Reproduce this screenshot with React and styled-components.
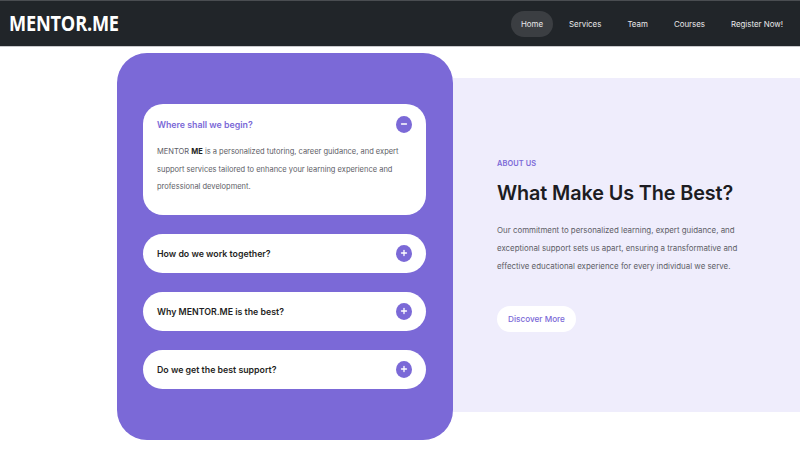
import React from "react";
import styled, { createGlobalStyle } from "styled-components";

const Global = createGlobalStyle`
  html, body { margin: 0; padding: 0; background: #ffffff; }
  body { font-family: "Inter", "Noto Sans", sans-serif; }
  * { box-sizing: border-box; }
`;

const Page = styled.div`
  width: 800px;
  height: 463px;
  overflow: hidden;
  background: #ffffff;
`;

const Nav = styled.nav`
  height: 47px;
  background: #212529;
  border-top: 1px solid #4a4d51;
  border-bottom: 1px solid #c9c9cc;
  display: flex;
  align-items: center;
  justify-content: space-between;
  padding: 0 7px 0 9px;
`;

const Logo = styled.div`
  font-family: "Open Sans", sans-serif;
  font-weight: 700;
  font-size: 18.2px;
  line-height: 1;
  color: #ffffff;
  letter-spacing: -0.2px;
  transform: scaleY(1.15);
  transform-origin: left center;
`;

const Links = styled.div`
  display: flex;
  align-items: center;
  gap: 6px;
`;

const NavLink = styled.a`
  font-size: 7.9px;
  color: #e9e9ea;
  height: 26px;
  display: flex;
  align-items: center;
  padding: 0 10px;
  border-radius: 13px;
  background: ${(p) => (p.$active ? "#3b3e42" : "transparent")};
`;

const Section = styled.section`
  display: flex;
  align-items: flex-start;
  padding: 6px 0 0 117px;
`;

const Card = styled.div`
  width: 336px;
  flex: none;
  background: #7b69d7;
  border-radius: 30px;
  padding: 51px 27px 51px 26px;
  display: flex;
  flex-direction: column;
  gap: 19px;
`;

const Item = styled.div`
  background: #ffffff;
  border-radius: 20px;
  padding: ${(p) => (p.$open ? "13px 14px 19px 14px" : "0 14px")};
  min-height: 39px;
  display: flex;
  flex-direction: column;
  justify-content: center;
`;

const ItemHead = styled.div`
  display: flex;
  align-items: center;
  justify-content: space-between;
  height: ${(p) => (p.$open ? "14px" : "auto")};
`;

const ItemTitle = styled.div`
  font-size: 8.8px;
  font-weight: 600;
  color: ${(p) => (p.$open ? "#7b69d7" : "#1f1f24")};
`;

const Toggle = styled.span`
  width: 16px;
  height: 17px;
  border-radius: 50%;
  background: #7b69d7;
  display: flex;
  align-items: center;
  justify-content: center;
  flex: none;
`;

const Answer = styled.p`
  margin: 12px 0 0 0;
  font-size: 7.5px;
  line-height: 17.5px;
  color: #5d5d66;
`;

const Strong = styled.strong`
  color: #1f1f24;
  font-weight: 700;
`;

const About = styled.div`
  flex: 1;
  margin-top: 25px;
  height: 334px;
  background: #efedfc;
  padding: 81px 30px 0 44px;
`;

const Eyebrow = styled.div`
  font-size: 7.4px;
  font-weight: 600;
  color: #7b69d7;
  letter-spacing: 0.1px;
`;

const Heading = styled.h2`
  margin: 13px 0 0 0;
  font-size: 19.8px;
  line-height: 24px;
  font-weight: 600;
  color: #1c1c22;
  letter-spacing: -0.1px;
`;

const Body = styled.p`
  margin: 16px 0 0 0;
  font-size: 7.9px;
  line-height: 18px;
  color: #5d5d66;
  width: 260px;
`;

const Button = styled.button`
  margin-top: 31px;
  height: 26px;
  width: 79px;
  border: none;
  border-radius: 13px;
  background: #ffffff;
  color: #7b69d7;
  font-family: inherit;
  font-size: 8.2px;
  font-weight: 500;
  padding: 0;
`;

const Icon = ({ open }) => (
  <Toggle>
    <svg width="8" height="8" viewBox="0 0 8 8">
      <path d="M1.5 4h5" stroke="#fff" strokeWidth="1.3" strokeLinecap="round" />
      {!open && <path d="M4 1.5v5" stroke="#fff" strokeWidth="1.3" strokeLinecap="round" />}
    </svg>
  </Toggle>
);

const faqs = [
  "How do we work together?",
  "Why MENTOR.ME is the best?",
  "Do we get the best support?",
];

export default function App() {
  return (
    <Page>
      <Global />
      <Nav>
        <Logo>MENTOR.ME</Logo>
        <Links>
          <NavLink $active>Home</NavLink>
          <NavLink>Services</NavLink>
          <NavLink>Team</NavLink>
          <NavLink>Courses</NavLink>
          <NavLink>Register Now!</NavLink>
        </Links>
      </Nav>
      <Section>
        <Card>
          <Item $open>
            <ItemHead $open>
              <ItemTitle $open>Where shall we begin?</ItemTitle>
              <Icon open />
            </ItemHead>
            <Answer>
              MENTOR <Strong>ME</Strong> is a personalized tutoring, career guidance, and expert
              support services tailored to enhance your learning experience and
              professional development.
            </Answer>
          </Item>
          {faqs.map((q) => (
            <Item key={q}>
              <ItemHead>
                <ItemTitle>{q}</ItemTitle>
                <Icon />
              </ItemHead>
            </Item>
          ))}
        </Card>
        <About>
          <Eyebrow>ABOUT US</Eyebrow>
          <Heading>What Make Us The Best?</Heading>
          <Body>
            Our commitment to personalized learning, expert guidance, and
            exceptional support sets us apart, ensuring a transformative and
            effective educational experience for every individual we serve.
          </Body>
          <Button>Discover More</Button>
        </About>
      </Section>
    </Page>
  );
}
